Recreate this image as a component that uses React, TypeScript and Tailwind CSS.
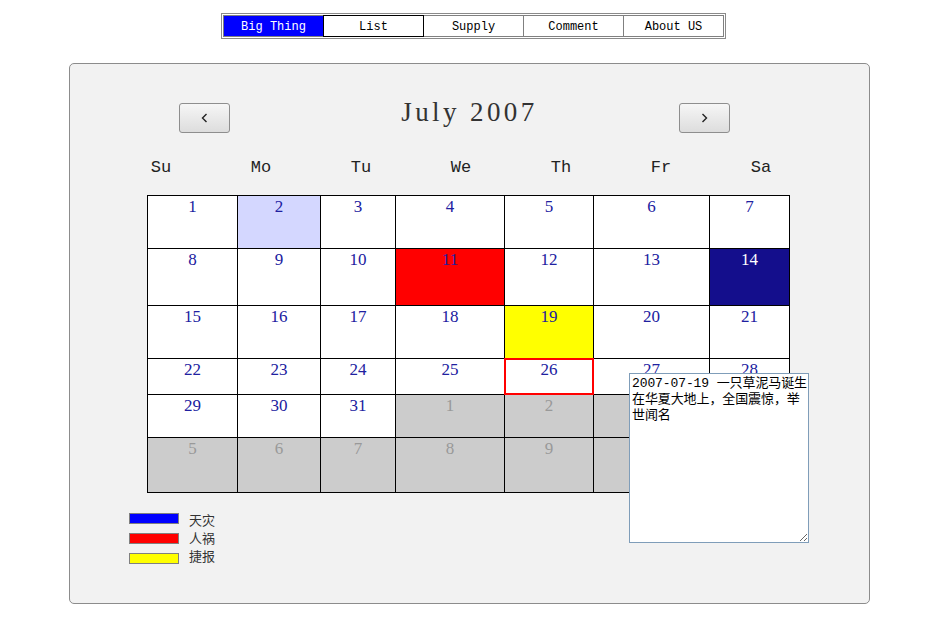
import React from "react";

type Kind = "cur" | "other" | "lav" | "red" | "navy" | "yellow" | "sel";

const rows: { n: number; k: Kind }[][] = [
  [
    { n: 1, k: "cur" },
    { n: 2, k: "lav" },
    { n: 3, k: "cur" },
    { n: 4, k: "cur" },
    { n: 5, k: "cur" },
    { n: 6, k: "cur" },
    { n: 7, k: "cur" },
  ],
  [
    { n: 8, k: "cur" },
    { n: 9, k: "cur" },
    { n: 10, k: "cur" },
    { n: 11, k: "red" },
    { n: 12, k: "cur" },
    { n: 13, k: "cur" },
    { n: 14, k: "navy" },
  ],
  [
    { n: 15, k: "cur" },
    { n: 16, k: "cur" },
    { n: 17, k: "cur" },
    { n: 18, k: "cur" },
    { n: 19, k: "yellow" },
    { n: 20, k: "cur" },
    { n: 21, k: "cur" },
  ],
  [
    { n: 22, k: "cur" },
    { n: 23, k: "cur" },
    { n: 24, k: "cur" },
    { n: 25, k: "cur" },
    { n: 26, k: "sel" },
    { n: 27, k: "cur" },
    { n: 28, k: "cur" },
  ],
  [
    { n: 29, k: "cur" },
    { n: 30, k: "cur" },
    { n: 31, k: "cur" },
    { n: 1, k: "other" },
    { n: 2, k: "other" },
    { n: 3, k: "other" },
    { n: 4, k: "other" },
  ],
  [
    { n: 5, k: "other" },
    { n: 6, k: "other" },
    { n: 7, k: "other" },
    { n: 8, k: "other" },
    { n: 9, k: "other" },
    { n: 10, k: "other" },
    { n: 11, k: "other" },
  ],
];

const kindClass: Record<Kind, string> = {
  cur: "bg-white text-[#2020a0]",
  other: "bg-[#cccccc] text-[#999999]",
  lav: "bg-[#d4d7ff] text-[#2020a0]",
  red: "bg-[#ff0000] text-[#2020a0]",
  navy: "bg-[#140e8c] text-white",
  yellow: "bg-[#ffff00] text-[#2020a0]",
  sel: "bg-white text-[#2020a0] outline outline-1 outline-[#ff0000] shadow-[inset_0_0_0_1px_#ff0000]",
};

const navItems = ["Big Thing", "List", "Supply", "Comment", "About US"];

function Chevron({ dir }: { dir: "l" | "r" }) {
  return (
    <svg width="7" height="10" viewBox="0 0 7 10">
      <polyline
        points={dir === "l" ? "5.5,1 1.5,5 5.5,9" : "1.5,1 5.5,5 1.5,9"}
        fill="none"
        stroke="#222"
        strokeWidth="1.4"
      />
    </svg>
  );
}

export default function App() {
  return (
    <div className="w-[950px] h-[639px] bg-white overflow-hidden font-['Liberation_Sans','Noto_Sans_CJK_SC',sans-serif]">
      {/* nav */}
      <div className="ml-[221px] mt-[13px] inline-flex border border-[#8a8a8a] p-[1px] align-top">
        {navItems.map((t, i) => (
          <div
            key={t}
            className={
              i === 0
                ? "relative w-[101px] h-[22px] pt-px flex items-center justify-center border border-[#808080] bg-[#0000ff] text-white text-[12px] font-['Liberation_Mono',monospace]"
                : i === 1
                ? "relative z-10 -ml-px w-[101px] h-[22px] pt-px flex items-center justify-center border border-black bg-white text-black text-[12px] font-['Liberation_Mono',monospace]"
                : "relative -ml-px w-[101px] h-[22px] pt-px flex items-center justify-center border border-[#808080] bg-white text-black text-[12px] font-['Liberation_Mono',monospace]"
            }
          >
            {t}
          </div>
        ))}
      </div>

      {/* panel */}
      <div className="relative ml-[69px] mt-[24px] w-[801px] h-[541px] border border-[#8c8c8c] rounded-[5px] bg-[#f2f2f2]">
        {/* header */}
        <div className="mt-[39px] pl-[109px] flex items-start">
          <button className="w-[51px] h-[30px] flex items-center justify-center border border-[#8e8e8e] rounded-[3px] bg-gradient-to-b from-[#f6f6f6] to-[#dddddd]">
            <Chevron dir="l" />
          </button>
          <div className="w-[449px] pl-[30px] -mt-[6px] text-center text-[27px] leading-[30px] tracking-[3.4px] text-[#333] font-['Liberation_Serif',serif]">
            July 2007
          </div>
          <button className="w-[51px] h-[30px] flex items-center justify-center border border-[#8e8e8e] rounded-[3px] bg-gradient-to-b from-[#f6f6f6] to-[#dddddd]">
            <Chevron dir="r" />
          </button>
        </div>

        {/* weekday header */}
        <div className="mt-[25px] ml-[41px] w-[700px] grid grid-cols-7 text-center text-[17px] leading-[20px] text-[#222] font-['Liberation_Mono',monospace]">
          {["Su", "Mo", "Tu", "We", "Th", "Fr", "Sa"].map((d) => (
            <div key={d}>{d}</div>
          ))}
        </div>

        {/* calendar grid */}
        <div className="mt-[17px] ml-[77px] w-fit grid grid-cols-[89px_82px_74px_108px_88px_115px_79px] grid-rows-[52px_56px_52px_35px_42px_54px] gap-px p-px bg-black">
          {rows.flat().map((c, i) => (
            <div
              key={i}
              className={
                "pt-px text-center text-[17px] leading-[20px] font-['Liberation_Serif',serif] " +
                kindClass[c.k]
              }
            >
              {c.n}
            </div>
          ))}
        </div>

        {/* legend */}
        <div className="mt-[20px] ml-[59px] flex items-start gap-[10px]">
          <div className="flex flex-col gap-[9px]">
            <div className="w-[50px] h-[11px] border border-[#808080] bg-[#0000ff]" />
            <div className="w-[50px] h-[11px] border border-[#808080] bg-[#ff0000]" />
            <div className="w-[50px] h-[11px] border border-[#808080] bg-[#ffff00]" />
          </div>
          <div className="-mt-[2px] flex flex-col text-[13px] leading-[18px] text-[#333] font-['Noto_Sans_CJK_SC',sans-serif]">
            <div>天灾</div>
            <div>人祸</div>
            <div>捷报</div>
          </div>
        </div>

        {/* note textarea (floating over grid) */}
        <textarea
          readOnly
          defaultValue="2007-07-19 一只草泥马诞生在华夏大地上，全国震惊，举世闻名"
          className="absolute left-[559px] top-[309px] w-[180px] h-[170px] border border-[#7f9db9] bg-white pl-[2px] pr-0 pt-[2px] pb-0 text-[13px] leading-[16px] tracking-[-0.1px] text-black outline-none font-['Liberation_Mono','Noto_Sans_CJK_SC',monospace]"
        />
      </div>
    </div>
  );
}
